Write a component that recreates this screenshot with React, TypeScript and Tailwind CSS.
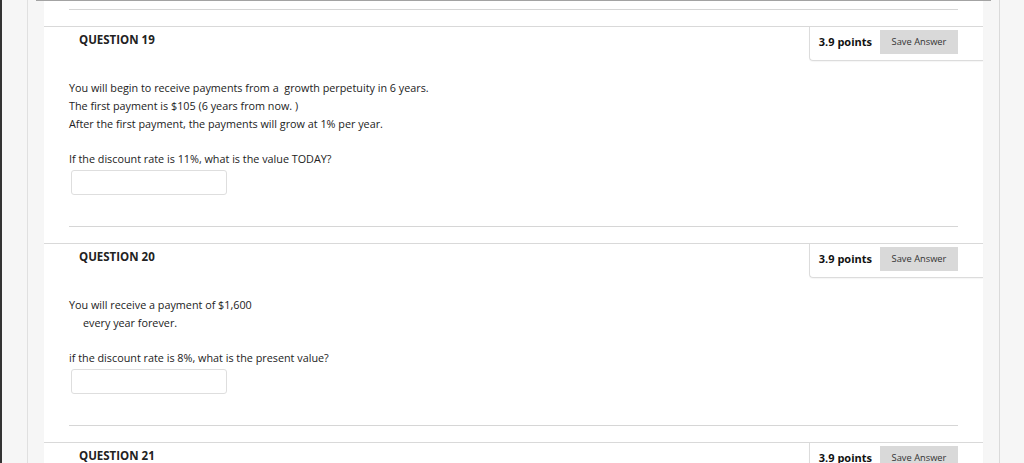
import React from 'react';

type Question = {
  num: number;
  lines: { text: string; indent?: boolean }[];
  ask: string;
};

const questions: Question[] = [
  {
    num: 19,
    lines: [
      { text: 'You will begin to receive payments from a \u00a0growth perpetuity in 6 years.' },
      { text: 'The first payment is $105 (6 years from now. )' },
      { text: 'After the first payment, the payments will grow at 1% per year.' },
    ],
    ask: 'If the discount rate is 11%, what is the value TODAY?',
  },
  {
    num: 20,
    lines: [
      { text: 'You will receive a payment of $1,600' },
      { text: 'every year forever.', indent: true },
    ],
    ask: 'if the discount rate is 8%, what is the present value?',
  },
];

const Header = ({ num }: { num: number }) => (
  <div className="flex items-start justify-between border-t border-[#d9d9d9]">
    <div className="pl-[35px] pt-[3px] text-[11.5px] font-bold leading-[20px] text-[#222]">
      QUESTION {num}
    </div>
    <div className="flex items-center gap-[8px] rounded-bl-[4px] border-b border-l border-[#dcdcdc] pb-[6px] pl-[9px] pr-[25px] pt-[3px] shadow-[0_1px_1px_rgba(0,0,0,0.04)]">
      <span className="text-[11px] font-bold text-[#111]">3.9 points</span>
      <button className="h-[24px] w-[78px] bg-[#d9d9d9] text-[9.3px] text-[#333]">
        Save Answer
      </button>
    </div>
  </div>
);

const QuestionBlock = ({ q }: { q: Question }) => (
  <div>
    <Header num={q.num} />
    <div className="mt-[18px] pl-[25px] text-[10.8px] leading-[18px] text-[#222]">
      {q.lines.map((l, i) => (
        <div key={i} className={l.indent ? 'pl-[14px]' : ''}>
          {l.text}
        </div>
      ))}
      <div className="mt-[17px]">{q.ask}</div>
      <div className="ml-[2px] mt-[2px] h-[25px] w-[156px] rounded-[3px] border border-[#dedede] bg-white" />
    </div>
    <div className="mx-[25px] mt-[31px] h-px bg-[#d6d6d6]" />
    <div className="h-[16px]" />
  </div>
);

export default function App() {
  return (
    <div
      className="flex h-[463px] w-[1024px] overflow-hidden bg-[#f6f6f6]"
      style={{ fontFamily: '"Open Sans", "Noto Sans", sans-serif' }}
    >
      <div className="w-[2px] shrink-0 bg-[#333]" />
      <div className="w-[26px] shrink-0 border-r border-[#e0e0e0]" />
      <div className="flex w-[972px] shrink-0 flex-col border-r border-[#dadada]">
        <div className="mx-[8px] h-[3px] border-x border-b border-[#a3a3a3] bg-white" />
        <div className="ml-[16px] mr-[16px] flex-1 bg-white">
          <div className="mx-[25px] mt-[8px] h-px bg-[#d6d6d6]" />
          <div className="h-[16px]" />
          {questions.map((q) => (
            <QuestionBlock key={q.num} q={q} />
          ))}
          <Header num={21} />
        </div>
      </div>
      <div className="flex-1" />
    </div>
  );
}
